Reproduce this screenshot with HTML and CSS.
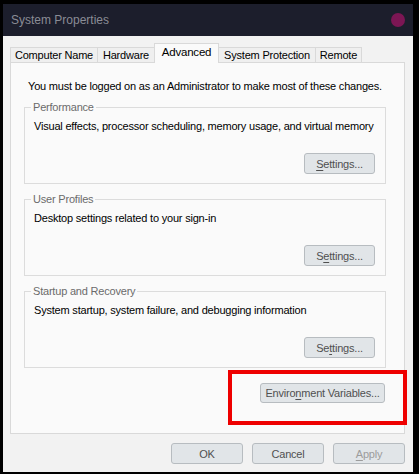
FILE: index.html
```html
<!DOCTYPE html>
<html>
<head>
<meta charset="utf-8">
<link rel="stylesheet" href="styles.css">
</head>
<body>
<div class="window">
  <div class="titlebar">
    <span class="title">System Properties</span>
    <span class="close-dot"></span>
  </div>
  <div class="main">
    <div class="tabs">
      <div class="tab t-name">Computer Name</div>
      <div class="tab t-hw">Hardware</div>
      <div class="tab tab-active t-adv">Advanced</div>
      <div class="tab t-sp">System Protection</div>
      <div class="tab t-rem">Remote</div>
    </div>
    <div class="panel">
      <p class="intro">You must be logged on as an Administrator to make most of these changes.</p>
      <fieldset class="group">
        <legend>Performance</legend>
        <p class="desc">Visual effects, processor scheduling, memory usage, and virtual memory</p>
        <div class="btn-row"><button class="btn btn-settings"><u>S</u>ettings...</button></div>
      </fieldset>
      <fieldset class="group">
        <legend>User Profiles</legend>
        <p class="desc">Desktop settings related to your sign-in</p>
        <div class="btn-row"><button class="btn btn-settings">S<u>e</u>ttings...</button></div>
      </fieldset>
      <fieldset class="group">
        <legend>Startup and Recovery</legend>
        <p class="desc">System startup, system failure, and debugging information</p>
        <div class="btn-row"><button class="btn btn-settings">Se<u>t</u>tings...</button></div>
      </fieldset>
      <div class="env-row"><button class="btn btn-env">Enviro<u>n</u>ment Variables...</button></div>
    </div>
    <div class="footer">
      <button class="btn btn-foot">OK</button>
      <button class="btn btn-foot">Cancel</button>
      <button class="btn btn-foot btn-disabled"><u>A</u>pply</button>
    </div>
  </div>
  <div class="highlight"></div>
</div>
</body>
</html>
```
FILE: styles.css
```css
html, body {
  margin: 0;
  padding: 0;
}
body {
  background: #000;
  width: 419px;
  height: 474px;
  overflow: hidden;
  font-family: "Liberation Sans", Arial, sans-serif;
  font-size: 11px;
  letter-spacing: -0.2px;
  color: #000;
}
.window {
  position: relative;
  margin: 4px 0 0 3px;
  width: 410px;
  height: 468px;
  background: #f2f2f2;
  display: flex;
  flex-direction: column;
}
.titlebar {
  height: 32px;
  flex: none;
  background: #1c1e2c;
  display: flex;
  align-items: center;
  justify-content: space-between;
  padding: 0 8px 0 8px;
}
.title {
  color: #8a8c95;
  font-size: 12px;
  letter-spacing: 0;
}
.close-dot {
  width: 14px;
  height: 14px;
  border-radius: 50%;
  background: #7c1654;
}
.main {
  padding: 7px 8px 0 7px;
  display: flex;
  flex-direction: column;
}
.tabs {
  display: flex;
  align-items: flex-end;
  height: 20px;
  margin-bottom: -1px;
  position: relative;
  z-index: 1;
}
.tab {
  box-sizing: border-box;
  height: 15px;
  margin-bottom: 1px;
  border: 1px solid #d9d9d9;
  border-bottom: none;
  border-left: none;
  background: #efefef;
  line-height: 14px;
  text-align: center;
  white-space: nowrap;
}
.tabs .tab:first-child {
  border-left: 1px solid #d9d9d9;
}
.t-name { width: 88px; }
.t-hw { width: 57px; }
.t-sp { width: 97px; }
.t-rem { width: 46px; }
.tab-active {
  height: 20px;
  margin-bottom: 0;
  margin-left: -1px;
  width: 65px;
  background: #fafafa;
  border-left: 1px solid #d9d9d9;
  line-height: 17px;
  font-size: 11.5px;
}
.panel {
  box-sizing: border-box;
  height: 372px;
  border: 1px solid #d9d9d9;
  background: #fafafa;
  padding: 15px 18px 0 13px;
  display: flex;
  flex-direction: column;
}
.intro {
  margin: 0 0 6px 4px;
  line-height: 16px;
  white-space: nowrap;
}
.group {
  margin: 0 0 8px 0;
  padding: 0 10px 9px 9px;
  border: 1px solid #dcdcdc;
  min-width: 0;
}
.group legend {
  margin-left: -3px;
  padding: 0 2px;
  line-height: 14px;
  color: #6b6b6b;
  white-space: nowrap;
}
.desc {
  margin: 4px 0 0 0;
  line-height: 16px;
  white-space: nowrap;
}
.btn-row {
  display: flex;
  justify-content: flex-end;
  margin-top: 19px;
}
.btn {
  box-sizing: border-box;
  font-family: inherit;
  font-size: 11px;
  letter-spacing: -0.2px;
  color: #505050;
  background: #e1e5e8;
  border: 1px solid #b7bcc0;
  border-radius: 3px;
  padding: 0;
  height: 21px;
  line-height: 18px;
  white-space: nowrap;
}
.btn u {
  text-decoration-thickness: 1px;
  text-underline-offset: 2px;
}
.btn-settings {
  width: 71px;
}
.env-row {
  display: flex;
  justify-content: flex-end;
  margin-top: 7px;
  padding-right: 1px;
}
.btn-env {
  width: 125px;
  height: 20px;
}
.footer {
  display: flex;
  justify-content: flex-end;
  gap: 9px;
  margin-top: 9px;
}
.btn-foot {
  width: 72px;
  height: 21px;
}
.btn-disabled {
  color: #9c9c9c;
}
.highlight {
  position: absolute;
  left: 225px;
  top: 366px;
  width: 179px;
  height: 55px;
  box-sizing: border-box;
  border: 4px solid #ee0000;
}
```
